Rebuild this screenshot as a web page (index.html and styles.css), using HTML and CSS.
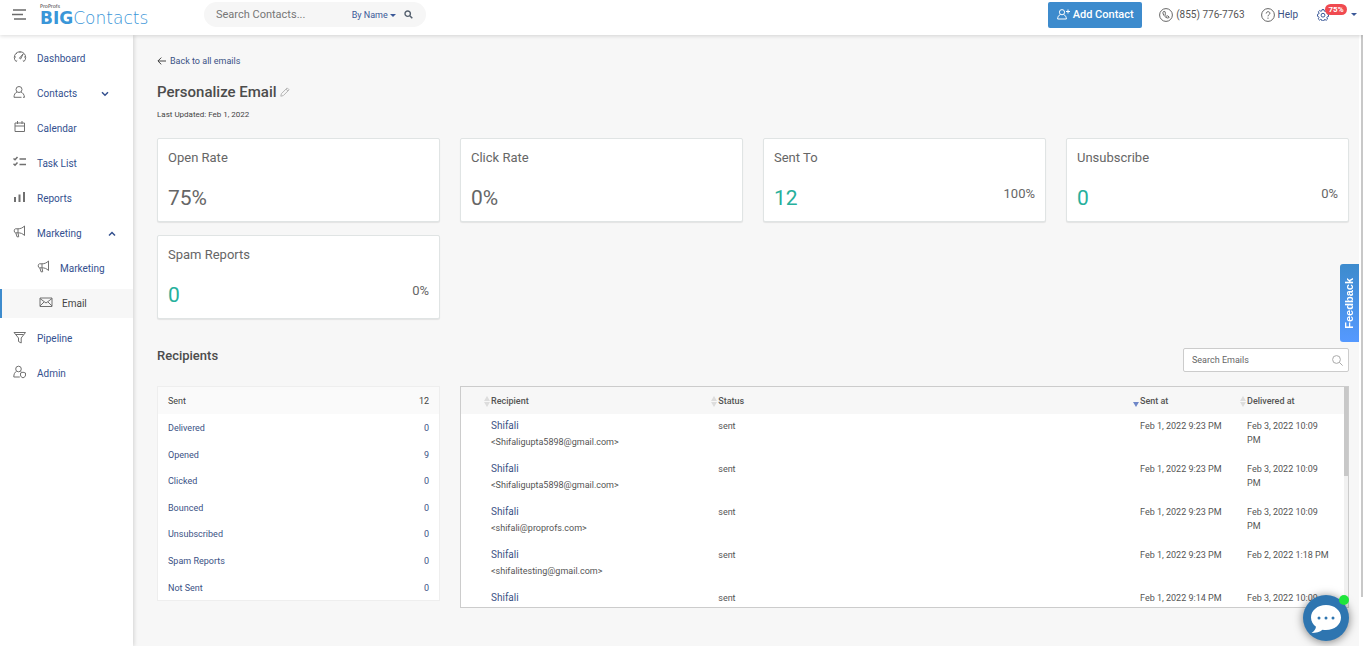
FILE: index.html
```html
<!DOCTYPE html>
<html lang="en">
<head>
    <meta charset="UTF-8">
    <meta name="viewport" content="width=device-width, initial-scale=1.0">
    <title>BIGContacts - Personalize Email</title>
    <link rel="stylesheet" href="styles.css">
</head>
<body>

    <header class="topbar">
        <button class="menu" aria-label="Menu">
            <svg width="14" height="11" viewBox="0 0 14 11"><path d="M1 1h13M0 5.5h11M2 10h12" stroke="#6b6b6b" stroke-width="1.4"/></svg>
        </button>
        <a class="logo" href="#">
            <small>ProProfs</small>
            <span><b>BIG</b>Contacts</span>
        </a>
        <form class="search">
            <input type="text" placeholder="Search Contacts..." aria-label="Search Contacts">
            <button type="button" class="byname">By Name <i class="caret"></i></button>
            <button type="button" class="find" aria-label="Search">
                <svg width="9" height="9" viewBox="0 0 9 9"><circle cx="3.7" cy="3.7" r="2.7" fill="none" stroke="#55606e" stroke-width="1.4"/><path d="M5.8 5.8l2.5 2.5" stroke="#55606e" stroke-width="1.5"/></svg>
            </button>
        </form>
        <div class="tools">
            <button class="add">
                <svg width="13" height="11" viewBox="0 0 13 11" fill="none" stroke="#fff" stroke-width="1"><circle cx="5" cy="3.2" r="2.6"/><path d="M3.3 5.6C1.6 6.3.8 7.6.6 10h8.8C9.200 7.600 8.400 6.300 6.700 5.600M9 2.500h4M11 .5v4"/></svg>
                Add Contact
            </button>
            <a class="phone" href="tel:8557767763">
                <svg width="14" height="14" viewBox="0 0 14 14" fill="none" stroke="#666"><circle cx="7" cy="7" r="6.4"/><path d="M4.500 3.500c-.8.6-.8 2 .3 3.700S7.900 10.400 9.500 10l.7-1-1.600-1.200-.9.5c-.7-.3-1.600-1.500-1.800-2.300l.6-.7-.7-1.900z"/></svg>
                (855) 776-7763
            </a>
            <a class="help" href="#">
                <svg width="14" height="14" viewBox="0 0 14 14" fill="none" stroke="#666"><circle cx="7" cy="7" r="6.400"/><path d="M5.200 5.500c0-2.400 3.700-2.300 3.700-.2C8.900 6.700 7 6.600 7 8.300M7 9.600v1.200"/></svg>
                Help
            </a>
            <button class="settings" aria-label="Settings">
                <svg width="12" height="12" viewBox="0 0 12 12" fill="none" stroke="#3b5998"><path d="M5 .6h2l.3 1.500 1 .4 1.300-.8 1.300 1.400-.8 1.200.3.900 1.100.3v2l-1.300.3-.4.900.8 1.300-1.400 1.300-1.200-.8-1 .4-.3 1.100H5l-.3-1.300-1-.4-1.200.8L1.200 9.800 2 8.600l-.4-.9L.500 7.300v-2l1.200-.3.4-.9-.8-1.300 1.400-1.300 1.200.8.900-.4z"/><circle cx="6" cy="6.200" r="1.900"/></svg>
                <span class="badge">75%</span>
                <i class="caret"></i>
            </button>
        </div>
    </header>

    <div class="page">
        <nav class="sidebar">
            <a href="#">
                <svg width="14" height="14" viewBox="0 0 14 14"><path d="M3 11.500a5.700 5.700 0 1 1 8 0M3 11.500l1.200-1M11 11.500l-1.200-1M1.500 7H3M7 1.500V3M3 3l1 1M12.500 7H11M6.400 8.200l3.800-4.400-2.600 5.200z"/></svg>
                Dashboard
            </a>
            <a href="#">
                <svg width="14" height="14" viewBox="0 0 14 14"><circle cx="6" cy="4.500" r="3"/><path d="M4 7C2.200 7.800 1 9.500 1 12.300h7.500M10 12.300h1.500C11.200 9.500 9.800 7.800 8 7"/></svg>
                Contacts
                <svg class="arrow" width="8" height="6" viewBox="0 0 8 6"><path d="M1 1.300l3 3 3-3"/></svg>
            </a>
            <a href="#">
                <svg width="14" height="14" viewBox="0 0 14 14"><path d="M2 3h9.500v8.500H2zM2 6h9.500M4.500 1v3M9 1v3"/></svg>
                Calendar
            </a>
            <a href="#">
                <svg width="14" height="14" viewBox="0 0 14 14"><path class="mid" d="M.5 3.500l1.500 1.300L4.500 2M.5 8.800L2 10.200l2.500-2.800M6.500 4H13M6.500 9.500H13"/></svg>
                Task List
            </a>
            <a href="#">
                <svg width="14" height="14" viewBox="0 0 14 14"><path class="thick" d="M2 7v5M6.500 4.500V12M11 2v10"/></svg>
                Reports
            </a>
            <a href="#">
                <svg width="14" height="14" viewBox="0 0 14 14"><path d="M11.500 1v9.500C9.500 8.500 7.500 7.800 5 7.800H2.500C.8 7.800.8 3.800 2.500 3.800H5C7.500 3.800 9.500 3 11.500 1zM5 3.800v4M2.800 7.800l1.200 4h1.700l-.7-4"/></svg>
                Marketing
                <svg class="arrow up" width="8" height="6" viewBox="0 0 8 6"><path d="M1 4.500l3-3 3 3"/></svg>
            </a>
            <a class="sub" href="#">
                <svg width="14" height="14" viewBox="0 0 14 14"><path d="M11.500 1v9.500C9.500 8.500 7.500 7.800 5 7.800H2.500C.8 7.800.8 3.800 2.500 3.800H5C7.500 3.800 9.500 3 11.500 1zM5 3.800v4M2.800 7.800l1.200 4h1.700l-.7-4"/></svg>
                Marketing
            </a>
            <a class="sub active" href="#">
                <svg width="14" height="14" viewBox="0 0 14 14"><path d="M1 3h12v8.500H1zM1 3.500l6 4.500 6-4.500M1 11l4-4M13 11L9 7"/></svg>
                Email
            </a>
            <a href="#">
                <svg width="14" height="14" viewBox="0 0 14 14"><path d="M1 2.500h11.500L8.200 8v5L5.500 11.500V8zM3 4.500h7.500"/></svg>
                Pipeline
            </a>
            <a href="#">
                <svg width="14" height="14" viewBox="0 0 14 14"><circle cx="5.500" cy="4" r="2.800"/><path d="M3.500 6.300C1.800 7.200.8 9 .8 12h6M7.500 6.300l1 .7M10 7.200l2.500.8v2c0 1.500-1 2.300-2.500 2.800-1.500-.5-2.500-1.300-2.500-2.800V8z"/></svg>
                Admin
            </a>
        </nav>

        <main class="content">
            <a class="back" href="#">
                <svg width="9" height="8" viewBox="0 0 9 8"><path d="M9 4H1M4.300.600L.900 4l3.400 3.400" fill="none" stroke="#444"/></svg>
                Back to all emails
            </a>
            <h1>Personalize Email
                <svg width="10" height="10" viewBox="0 0 10 10"><path d="M.8 9.200l.6-2.500L7.200.900l1.900 1.900-5.800 5.800zM6 2.100L7.900 4" fill="none" stroke="#b5b5b5"/></svg>
            </h1>
            <p class="updated">Last Updated: Feb 1, 2022</p>

            <section class="cards">
                <div class="card"><h2>Open Rate</h2><div><strong>75%</strong></div></div>
                <div class="card"><h2>Click Rate</h2><div><strong>0%</strong></div></div>
                <div class="card"><h2>Sent To</h2><div><strong class="green">12</strong><span>100%</span></div></div>
                <div class="card"><h2>Unsubscribe</h2><div><strong class="green">0</strong><span>0%</span></div></div>
                <div class="card"><h2>Spam Reports</h2><div><strong class="green">0</strong><span>0%</span></div></div>
            </section>

            <div class="listhead">
                <h3>Recipients</h3>
                <div class="filter">
                    <input type="text" placeholder="Search Emails" aria-label="Search Emails">
                    <svg width="11" height="11" viewBox="0 0 11 11"><circle cx="4.500" cy="4.500" r="3.900" fill="none" stroke="#aaa"/><path d="M7.300 7.300l3.300 3.300" stroke="#aaa"/></svg>
                </div>
            </div>

            <section class="lists">
                <div class="totals">
                    <a class="on" href="#">Sent<span>12</span></a>
                    <a href="#">Delivered<span>0</span></a>
                    <a href="#">Opened<span>9</span></a>
                    <a href="#">Clicked<span>0</span></a>
                    <a href="#">Bounced<span>0</span></a>
                    <a href="#">Unsubscribed<span>0</span></a>
                    <a href="#">Spam Reports<span>0</span></a>
                    <a href="#">Not Sent<span>0</span></a>
                </div>
                <div class="recipients">
                    <table>
                        <thead>
                            <tr>
                                <th class="name"><i class="sort"></i>Recipient</th>
                                <th><i class="sort"></i>Status</th>
                                <th class="date"><i class="sort down"></i>Sent at</th>
                                <th class="date"><i class="sort"></i>Delivered at</th>
                            </tr>
                        </thead>
                        <tbody>
                            <tr>
                                <td class="name"><a href="#">Shifali</a><p>&lt;Shifaligupta5898@gmail.com&gt;</p></td>
                                <td>sent</td>
                                <td>Feb 1, 2022 9:23 PM</td>
                                <td>Feb 3, 2022 10:09 PM</td>
                            </tr>
                            <tr>
                                <td class="name"><a href="#">Shifali</a><p>&lt;Shifaligupta5898@gmail.com&gt;</p></td>
                                <td>sent</td>
                                <td>Feb 1, 2022 9:23 PM</td>
                                <td>Feb 3, 2022 10:09 PM</td>
                            </tr>
                            <tr>
                                <td class="name"><a href="#">Shifali</a><p>&lt;shifali@proprofs.com&gt;</p></td>
                                <td>sent</td>
                                <td>Feb 1, 2022 9:23 PM</td>
                                <td>Feb 3, 2022 10:09 PM</td>
                            </tr>
                            <tr>
                                <td class="name"><a href="#">Shifali</a><p>&lt;shifalitesting@gmail.com&gt;</p></td>
                                <td>sent</td>
                                <td>Feb 1, 2022 9:23 PM</td>
                                <td>Feb 2, 2022 1:18 PM</td>
                            </tr>
                            <tr>
                                <td class="name"><a href="#">Shifali</a></td>
                                <td>sent</td>
                                <td>Feb 1, 2022 9:14 PM</td>
                                <td>Feb 3, 2022 10:09 PM</td>
                            </tr>
                        </tbody>
                    </table>
                    <div class="track"><div class="thumb"></div></div>
                </div>
            </section>
        </main>
        <div class="pagetrack"><div class="pagethumb"></div></div>
    </div>

    <button class="feedback"><span>Feedback</span></button>
    <button class="chat" aria-label="Chat">
        <svg width="32" height="30" viewBox="0 0 32 30"><path d="M16 1C7.500 1 1 6.500 1 13.500c0 4 2 7 5 9.300C5.500 25.500 4 27.500 1.500 29c4.500 0 8.500-1 11-3.300 1 .2 2.300.3 3.500.3 8.500 0 15-5.500 15-12.500S24.500 1 16 1z" fill="#fff"/><g fill="#2e75b0"><circle cx="9" cy="14" r="1.500"/><circle cx="16" cy="14" r="1.500"/><circle cx="23" cy="14" r="1.500"/></g></svg>
        <i class="online"></i>
    </button>

</body>
</html>
```
FILE: styles.css
```css
*{
    margin: 0;
    padding: 0;
    box-sizing: border-box;
}
body{
    height: 100vh;
    display: flex;
    flex-direction: column;
    overflow: hidden;
    font: 10px/14px Roboto, "Liberation Sans", sans-serif;
    color: #555;
    background: #f7f7f7;
}
a{
    color: #3b5285;
    text-decoration: none;
}
button, input{
    font: inherit;
    color: inherit;
    border: none;
    background: none;
    outline: none;
}
button{
    cursor: pointer;
}
svg{
    flex: none;
}
.caret{
    display: inline-block;
    border: 3px solid transparent;
    border-top-color: #3b5998;
    border-bottom: none;
    vertical-align: middle;
}

/* top bar */
.topbar{
    height: 35px;
    flex: none;
    display: flex;
    align-items: center;
    padding: 0 6px 6px 12px;
    background: #fff;
    box-shadow: 0 1px 4px rgba(0,0,0,.15);
    position: relative;
    z-index: 2;
}
.menu{
    height: 12px;
    width: 28px;
    text-align: left;
}
.menu svg{
    display: block;
}
.logo{
    width: 164px;
    color: #3a96d8;
    font: 200 17px/14px "DejaVu Sans", sans-serif;
}
.logo small{
    display: block;
    margin-bottom: 2px;
    font: 5px/5px "DejaVu Sans", sans-serif;
    color: #333;
}
.logo span{
    display: block;
}
.logo b{
    font-weight: 700;
}
.search{
    width: 222px;
    height: 25px;
    padding: 0 12px;
    display: flex;
    align-items: center;
    border-radius: 13px;
    background: #f6f6f6;
}
.search input{
    flex: 1;
    min-width: 0;
    font-size: 11px;
}
.search input::placeholder{
    color: #777;
}
.byname{
    color: #3b5998;
    margin-right: 8px;
    font-size: 9px;
}
.find{
    width: 10px;
    height: 10px;
}
.find svg{
    display: block;
}
.tools{
    margin-left: auto;
    display: flex;
    align-items: center;
}
.tools a{
    display: flex;
    align-items: center;
    gap: 3px;
}
.add{
    height: 26px;
    width: 94px;
    margin-right: 17px;
    display: flex;
    align-items: center;
    justify-content: center;
    gap: 3px;
    border-radius: 2px;
    background: #3d8bcd;
    color: #fff;
    font-size: 11px;
    font-weight: 500;
}
.tools .phone{
    color: #555;
    margin-right: 16px;
}
.tools .help{
    margin-right: 19px;
}
.settings{
    width: 40px;
    height: 14px;
    display: flex;
    align-items: center;
    justify-content: space-between;
    position: relative;
}
.badge{
    position: absolute;
    left: 8px;
    top: -4px;
    width: 22px;
    border-radius: 6px;
    background: #f04a50;
    color: #fff;
    font-size: 8px;
    line-height: 11px;
    font-weight: 700;
}

/* side menu */
.page{
    flex: 1;
    min-height: 0;
    display: flex;
}
.sidebar{
    width: 133px;
    flex: none;
    padding-top: 9px;
    background: #fff;
    box-shadow: 1px 0 4px rgba(0,0,0,.15);
}
.sidebar a{
    height: 29px;
    margin-bottom: 6px;
    padding-left: 13px;
    display: flex;
    align-items: center;
    gap: 10px;
    color: #34518f;
}
.sidebar svg{
    margin-bottom: 4px;
    fill: none;
    stroke: #707070;
}
.sidebar .mid{
    stroke-width: 1.5;
}
.sidebar .thick{
    stroke-width: 2;
}
.sidebar .arrow{
    margin: 0 0 0 14px;
    stroke: #34518f;
    stroke-width: 1.5;
}
.sidebar .up{
    margin-left: 16px;
}
.sidebar a.sub{
    padding-left: 37px;
    gap: 9px;
}
.sidebar a.active{
    border-left: 2px solid #3d8bcd;
    background: #f7f7f7;
    color: #444;
}

/* content */
.content{
    flex: 1;
    min-width: 0;
    padding: 19px 10px 0 24px;
}
.back{
    display: flex;
    align-items: center;
    gap: 4px;
    font-size: 9px;
}
h1{
    margin-top: 14px;
    font-size: 15px;
    line-height: 20px;
    font-weight: 500;
    color: #4c4c4c;
}
.updated{
    margin-top: 6px;
    font-size: 8px;
    color: #444;
}
.cards{
    margin-top: 16px;
    display: grid;
    grid-template-columns: repeat(4, 1fr);
    gap: 13px 20px;
}
.card{
    height: 84px;
    padding: 10px;
    border: 1px solid #e0e4e4;
    border-radius: 2px;
    background: #fff;
    box-shadow: 0 1px 1px rgba(0,0,0,.08);
}
.card h2{
    font-size: 13px;
    line-height: 18px;
    font-weight: 400;
    color: #666;
}
.card div{
    margin-top: 18px;
    display: flex;
    justify-content: space-between;
    font-size: 13px;
    line-height: 18px;
    color: #666;
}
.card strong{
    font-size: 21px;
    line-height: 26px;
    font-weight: 400;
}
.card .green{
    color: #27b09c;
}
.listhead{
    margin-top: 29px;
    display: flex;
    justify-content: space-between;
}
.listhead h3{
    font-size: 13px;
    line-height: 16px;
    font-weight: 500;
    color: #4c4c4c;
}
.filter{
    width: 166px;
    height: 24px;
    padding: 0 5px 0 8px;
    display: flex;
    align-items: center;
    border: 1px solid #ccc;
    border-radius: 2px;
    background: #fff;
}
.filter input{
    flex: 1;
    min-width: 0;
    font-size: 9px;
}
.filter input::placeholder{
    color: #666;
}
.lists{
    margin-top: 14px;
    display: grid;
    grid-template-columns: repeat(4, 1fr);
    gap: 20px;
    align-items: start;
}
.totals{
    height: 215px;
    display: grid;
    grid-auto-rows: 1fr;
    border: 1px solid #eee;
    background: #fff;
}
.totals a{
    padding: 2px 10px 0;
    display: flex;
    align-items: center;
    justify-content: space-between;
    font-size: 9px;
}
.totals .on{
    background: #fafafa;
    color: #444;
}
.recipients{
    grid-column: span 3;
    height: 222px;
    display: flex;
    overflow: hidden;
    border: 1px solid #ccc;
    background: #fff;
}
table{
    flex: 1;
    min-width: 0;
    table-layout: fixed;
    border-collapse: collapse;
    font-size: 9px;
}
th{
    height: 27px;
    padding-left: 10px;
    text-align: left;
    font-weight: 500;
    background: #f7f7f7;
    position: relative;
}
th.name{
    width: 28%;
}
th.date{
    width: 107px;
}
td{
    height: 43px;
    padding: 5px 12px 0 10px;
    vertical-align: top;
}
th.name, td.name{
    padding-left: 30px;
}
td a{
    font-size: 10px;
}
td p{
    margin-top: 2px;
}
.sort{
    position: absolute;
    margin: 2px 0 0 -7px;
}
.sort::before, .sort::after{
    content: "";
    display: block;
    border: 3px solid transparent;
    border-top: none;
    border-bottom: 5px solid #ddd;
}
.sort::after{
    margin-top: 1px;
    border-top: 5px solid #ddd;
    border-bottom: none;
}
.sort.down::before{
    visibility: hidden;
}
.sort.down::after{
    border-top-color: #6f87c8;
}
.track{
    width: 4px;
    background: #f1f1f1;
}
.thumb{
    height: 89px;
    background: #c8c8c8;
}
.pagetrack{
    width: 4px;
    padding-left: 2px;
    background: #fff;
}
.pagethumb{
    height: 92%;
    background: #c8c8c8;
}

/* floating buttons */
.feedback{
    position: fixed;
    right: 4px;
    top: 264px;
    width: 19px;
    height: 78px;
    border-radius: 3px 0 0 3px;
    background: linear-gradient(#3d8bcd, #5599ff);
    color: #fff;
    font: bold 11px/18px "Liberation Sans", sans-serif;
}
.feedback span{
    display: block;
    writing-mode: vertical-rl;
    transform: rotate(180deg);
    text-align: center;
}
.chat{
    position: fixed;
    right: 14px;
    bottom: 5px;
    width: 46px;
    height: 46px;
    border-radius: 50%;
    background: #2e75b0;
    box-shadow: 0 1px 10px rgba(0,0,0,.5);
}
.chat svg{
    display: block;
    margin: 2px auto 0;
}
.online{
    position: absolute;
    right: 0;
    top: 0;
    width: 10px;
    height: 10px;
    border-radius: 50%;
    background: #1fe53b;
}
```
